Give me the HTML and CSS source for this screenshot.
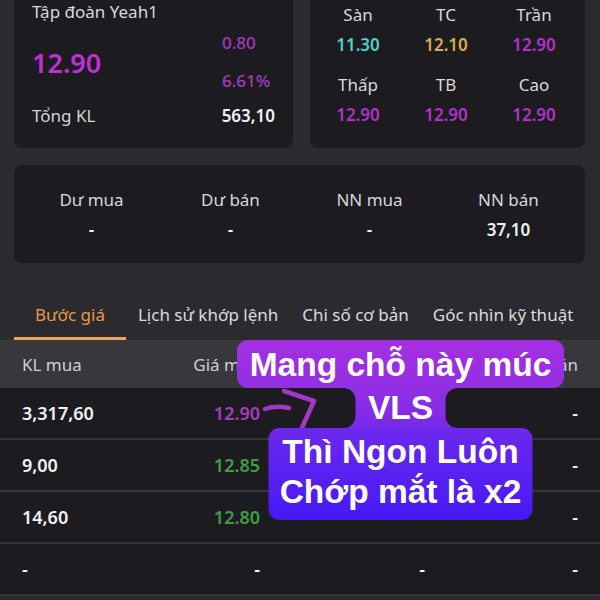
FILE: index.html
```html
<!DOCTYPE html>
<html lang="vi">
<head>
<meta charset="utf-8">
<title>Bước giá</title>
<link rel="stylesheet" href="styles.css">
</head>
<body>
<div class="page">
  <div class="top-row">
    <section class="card quote">
      <div class="q-name">Tập đoàn Yeah1</div>
      <div class="q-price-row">
        <div class="q-big">12.90</div>
        <div class="q-changes">
          <span>0.80</span>
          <span>6.61%</span>
        </div>
      </div>
      <div class="q-vol">
        <span>Tổng KL</span>
        <span class="q-vol-val">563,10</span>
      </div>
    </section>
    <section class="card range">
      <div class="cell"><div class="lbl">Sàn</div><div class="val cyan">11.30</div></div>
      <div class="cell"><div class="lbl">TC</div><div class="val yellow">12.10</div></div>
      <div class="cell"><div class="lbl">Trần</div><div class="val magenta">12.90</div></div>
      <div class="cell"><div class="lbl">Thấp</div><div class="val magenta">12.90</div></div>
      <div class="cell"><div class="lbl">TB</div><div class="val magenta">12.90</div></div>
      <div class="cell"><div class="lbl">Cao</div><div class="val magenta">12.90</div></div>
    </section>
  </div>

  <section class="card flows">
    <div class="cell"><div class="lbl">Dư mua</div><div class="val">-</div></div>
    <div class="cell"><div class="lbl">Dư bán</div><div class="val">-</div></div>
    <div class="cell"><div class="lbl">NN mua</div><div class="val">-</div></div>
    <div class="cell"><div class="lbl">NN bán</div><div class="val">37,10</div></div>
  </section>

  <nav class="tabs">
    <div class="tab active">Bước giá</div>
    <div class="tab">Lịch sử khớp lệnh</div>
    <div class="tab">Chi số cơ bản</div>
    <div class="tab">Góc nhìn kỹ thuật</div>
  </nav>

  <div class="book">
    <div class="book-head">
      <span>KL mua</span><span class="r">Giá mua</span><span class="r">Giá bán</span><span class="r">KL bán</span>
    </div>
    <div class="book-row">
      <span>3,317,60</span><span class="r magenta">12.90</span><span class="r">-</span><span class="r">-</span>
    </div>
    <div class="book-row">
      <span>9,00</span><span class="r green">12.85</span><span class="r">-</span><span class="r">-</span>
    </div>
    <div class="book-row">
      <span>14,60</span><span class="r green">12.80</span><span class="r">-</span><span class="r">-</span>
    </div>
    <div class="book-row">
      <span>-</span><span class="r">-</span><span class="r">-</span><span class="r">-</span>
    </div>
  </div>
</div>

<svg class="scribble" width="600" height="600" viewBox="0 0 600 600">
  <path d="M265 409 Q276 405 289 408" />
  <path d="M284 391 L314 401 L301 430" />
</svg>

<div class="sticker">
  <svg class="st-bg" width="327" height="180" viewBox="0 0 327 180">
    <defs>
      <linearGradient id="stg" x1="0" y1="0" x2="0" y2="1">
        <stop offset="0" stop-color="#a62ee2"/>
        <stop offset="0.26" stop-color="#932fe3"/>
        <stop offset="0.42" stop-color="#822be7"/>
        <stop offset="0.52" stop-color="#6a27ed"/>
        <stop offset="1" stop-color="#4519f6"/>
      </linearGradient>
    </defs>
    <path fill="url(#stg)" d="M11 0 H316 A11 11 0 0 1 327 11 V37 A11 11 0 0 1 316 48 H220.5 A12 12 0 0 0 208.5 60 V76 A12 12 0 0 0 220.5 88 H284.5 A11 11 0 0 1 295.5 99 V169 A11 11 0 0 1 284.5 180 H42.5 A11 11 0 0 1 31.5 169 V99 A11 11 0 0 1 42.5 88 H106.5 A12 12 0 0 0 118.5 76 V60 A12 12 0 0 0 106.5 48 H11 A11 11 0 0 1 0 37 V11 A11 11 0 0 1 11 0 Z"/>
  </svg>
  <div class="st-top">Mang chỗ này múc</div>
  <div class="st-mid">VLS</div>
  <div class="st-bot">Thì Ngon Luôn<br>Chớp mắt là x2</div>
</div>
</body>
</html>
```
FILE: styles.css
```css
html, body {
  margin: 0;
  padding: 0;
}
body {
  width: 600px;
  height: 600px;
  overflow: hidden;
  background: #2a2a2f;
  font-family: "Noto Sans", "Open Sans", sans-serif;
  color: #d4d4d6;
  position: relative;
}
.page {
  padding: 0 15px 0 14px;
}
.card {
  background: #1c1b20;
  border-radius: 8px;
}
.top-row {
  margin-top: -20px;
  display: grid;
  grid-template-columns: 279px 275px;
  gap: 17px;
}
.quote {
  padding: 20px 18px 20px 18px;
}
.q-name {
  font-size: 17px;
  line-height: 24px;
  color: #d8d8da;
}
.q-price-row {
  height: 76px;
  display: flex;
  justify-content: space-between;
  align-items: center;
}
.q-big {
  font-size: 27px;
  font-weight: 600;
  color: #c12fd4;
}
.q-changes {
  width: 53px;
  display: flex;
  flex-direction: column;
  font-size: 17px;
  font-weight: 500;
  color: #a53bbf;
}
.q-changes span {
  line-height: 38px;
}
.q-vol {
  margin-top: 4px;
  display: flex;
  justify-content: space-between;
  font-size: 17px;
  line-height: 24px;
}
.q-vol-val {
  font-weight: 600;
  color: #f2f2f2;
  font-size: 17px;
}
.range {
  padding: 20px 7px 18px 4px;
  display: grid;
  grid-template-columns: repeat(3, 1fr);
  row-gap: 10px;
}
.cell {
  text-align: center;
}
.lbl {
  font-size: 17px;
  line-height: 30px;
  color: #d8d8da;
}
.val {
  font-size: 17px;
  line-height: 30px;
  font-weight: 600;
  color: #f0f0f0;
}
.cyan { color: #52cccd; }
.yellow { color: #dcaa50; }
.magenta { color: #b032c8; }
.green { color: #3f9d48; }
.flows {
  margin-top: 17px;
  padding: 20px 7px 18px 8px;
  display: grid;
  grid-template-columns: repeat(4, 1fr);
}
.tabs {
  margin: 27px -15px 0 -14px;
  padding-left: 14px;
  display: flex;
  border-bottom: 1px solid #3a3a40;
}
.tab {
  padding: 2px 12px 0;
  line-height: 45px;
  border-bottom: 3px solid transparent;
  font-size: 17px;
  color: #dcdcde;
  white-space: nowrap;
}
.tab.active {
  padding: 2px 21px 0;
  color: #e8994a;
  border-bottom-color: #eba55e;
}
.book {
  margin: 0 -15px 0 -14px;
}
.book-head, .book-row {
  display: grid;
  grid-template-columns: 120px 118px 165px 153px;
  padding: 0 22px;
  align-items: center;
}
.book-head {
  height: 47px;
  background: #37373c;
  font-size: 17px;
  color: #d0d0d2;
}
.book-row {
  height: 50px;
  background: #1c1b20;
  border-bottom: 2px solid #353539;
  font-size: 18px;
  font-weight: 600;
  color: #f2f2f2;
}
.r {
  text-align: right;
}
.book-row .magenta { color: #a83cc0; }

.scribble {
  position: absolute;
  left: 0;
  top: 0;
  fill: none;
  stroke: #a736c6;
  stroke-width: 4.5;
  stroke-linecap: round;
  stroke-linejoin: round;
}
.sticker {
  position: absolute;
  z-index: 1;
  left: 237px;
  top: 340px;
  width: 327px;
  display: flex;
  flex-direction: column;
  align-items: center;
  font-family: "Liberation Sans", Arial, sans-serif;
  font-weight: 700;
  font-size: 33.5px;
  color: #ffffff;
  text-align: center;
}
.st-bg {
  position: absolute;
  left: 0;
  top: 0;
  z-index: -1;
}
.st-top {
  width: 100%;
  height: 48px;
  line-height: 50px;
  white-space: nowrap;
}
.st-mid {
  width: 90px;
  height: 40px;
  line-height: 40px;
}
.st-bot {
  width: 264px;
  height: 92px;
  box-sizing: border-box;
  padding-top: 4px;
  line-height: 40px;
  white-space: nowrap;
}
```
